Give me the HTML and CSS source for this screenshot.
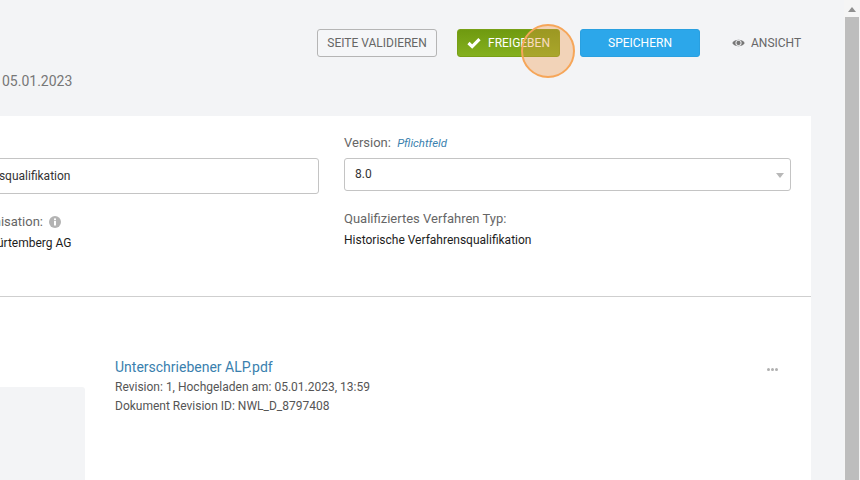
FILE: index.html
```html
<!DOCTYPE html>
<html lang="en">
<head>
    <meta charset="UTF-8">
    <title>Verfahren</title>
    <link rel="stylesheet" href="styles.css">
</head>
<body>
    <div class="page">
        <main class="content">
            <div class="topbar">
                <button class="btn btn-outline">SEITE VALIDIEREN</button>
                <div class="release-wrap">
                    <button class="btn btn-green">
                        <svg class="check" viewBox="0 0 14 12" width="14" height="12"><path d="M1.5 6 L5.2 9.6 L12.5 2.2" fill="none" stroke="#fff" stroke-width="3.2"/></svg>
                        FREIGEBEN
                    </button>
                    <span class="click-marker"></span>
                </div>
                <button class="btn btn-blue">SPEICHERN</button>
                <a class="view-link">
                    <svg viewBox="0 0 14 10" width="13" height="10"><path d="M0.3 5 C3 0.4 11 0.4 13.7 5 C11 9.6 3 9.6 0.3 5 Z" fill="#777"/><circle cx="7" cy="5" r="3.3" fill="#f3f4f6"/><circle cx="7" cy="5" r="2.3" fill="#777"/></svg>
                    ANSICHT
                </a>
            </div>
            <div class="date-line">05.01.2023</div>

            <section class="card">
                <div class="form-grid">
                    <div class="field">
                        <div class="label">&nbsp;</div>
                        <div class="input input-text">Historische Verfahrensqualifikation</div>
                        <div class="label label-info">
                            Verantwortliche Organisation:
                            <svg viewBox="0 0 12 12" width="12" height="12"><circle cx="6" cy="6" r="6" fill="#b3b3b3"/><rect x="5" y="5" width="2" height="4.5" fill="#fff"/><rect x="5" y="2.4" width="2" height="1.8" fill="#fff"/></svg>
                        </div>
                        <div class="value">EnBW Energie Baden-Würtemberg AG</div>
                    </div>
                    <div class="field">
                        <div class="label">Version: <em class="required">Pflichtfeld</em></div>
                        <div class="input input-select">8.0<span class="caret"></span></div>
                        <div class="label label-info">Qualifiziertes Verfahren Typ:</div>
                        <div class="value">Historische Verfahrensqualifikation</div>
                    </div>
                </div>
                <hr class="divider">
                <div class="doc-row">
                    <div class="doc-thumb"></div>
                    <div class="doc-info">
                        <a class="doc-title">Unterschriebener ALP.pdf</a>
                        <div class="doc-meta">Revision: 1, Hochgeladen am: 05.01.2023, 13:59</div>
                        <div class="doc-meta">Dokument Revision ID: NWL_D_8797408</div>
                    </div>
                    <div class="doc-more"><i></i><i></i><i></i></div>
                </div>
            </section>
        </main>
        <div class="scrollbar">
            <span class="arrow"></span>
            <div class="thumb"></div>
        </div>
    </div>
</body>
</html>
```

FILE: styles.css
```css
html, body {
    margin: 0;
    height: 480px;
    overflow: hidden;
}

body {
    font-family: Roboto, Arial, sans-serif;
    background-color: #f3f4f6;
    color: #555;
}

.page {
    display: flex;
    height: 480px;
}

.content {
    flex: 1;
    min-width: 0;
    padding-top: 29px;
}

.topbar {
    display: flex;
    align-items: center;
    height: 28px;
    padding-left: 317px;
}

.btn {
    height: 28px;
    box-sizing: border-box;
    font-family: Roboto, Arial, sans-serif;
    font-size: 12px;
    border-radius: 3px;
    padding: 0;
}

.btn-outline {
    width: 120px;
    background: #f5f6f8;
    border: 1px solid #b5b5b5;
    color: #666;
}

.release-wrap {
    position: relative;
    margin-left: 20px;
}

.btn-green {
    display: flex;
    align-items: center;
    justify-content: center;
    gap: 7px;
    width: 103px;
    background: linear-gradient(#6f9a10, #84b01f);
    border: 1px solid #78a016;
    color: #fff;
}

.click-marker {
    position: absolute;
    left: 64px;
    top: -5px;
    width: 50px;
    height: 50px;
    border: 2px solid #f6a659;
    border-radius: 50%;
    background: rgba(240, 150, 70, 0.35);
}

.btn-blue {
    width: 120px;
    margin-left: 20px;
    background: #2ca7ea;
    border: 1px solid #2aa0e0;
    color: #fff;
}

.view-link {
    display: flex;
    align-items: center;
    gap: 6px;
    margin-left: 32px;
    font-size: 12px;
    color: #666;
}

.date-line {
    margin-top: 15px;
    margin-left: 2px;
    font-size: 14px;
    line-height: 18px;
    color: #777;
}

.card {
    width: 811px;
    height: 364px;
    margin-top: 26px;
    background: #fff;
    overflow: hidden;
}

.form-grid {
    display: flex;
    gap: 25px;
    margin-left: -128px;
    padding-top: 19px;
}

.field {
    flex: none;
    width: 447px;
}

.label {
    height: 16px;
    line-height: 16px;
    font-size: 13px;
    color: #666;
}

.required {
    margin-left: 3px;
    font-size: 11.4px;
    color: #3a7fae;
}

.input {
    margin-top: 7px;
    box-sizing: border-box;
    background: #fff;
    border: 1px solid #c4c4c4;
    border-radius: 3px;
    padding-left: 10px;
    font-size: 12px;
    color: #333;
}

.input-text {
    height: 36px;
    line-height: 34px;
}

.input-select {
    position: relative;
    height: 33px;
    margin-bottom: 3px;
    line-height: 30px;
}

.caret {
    position: absolute;
    right: 6px;
    top: 14px;
    border-left: 4px solid transparent;
    border-right: 4px solid transparent;
    border-top: 5px solid #b8b8b8;
}

.label-info {
    display: flex;
    align-items: center;
    gap: 6px;
    margin-top: 20px;
}

.value {
    margin-top: 5px;
    font-size: 12px;
    line-height: 16px;
    color: #1c1c1c;
}

.divider {
    margin: 45px 0 0;
    border: none;
    border-top: 1px solid #cfcfcf;
}

.doc-row {
    position: relative;
    display: flex;
    gap: 30px;
    height: 170px;
}

.doc-thumb {
    width: 85px;
    height: 93px;
    margin-top: 90px;
    background: #f3f4f6;
    border-top-right-radius: 3px;
}

.doc-info {
    padding-top: 61px;
}

.doc-title {
    display: block;
    font-size: 14px;
    line-height: 18px;
    color: #3a7fae;
}

.doc-meta {
    margin-top: 3px;
    font-size: 12px;
    line-height: 16px;
    color: #555;
}

.doc-more {
    position: absolute;
    left: 767px;
    top: 71px;
    display: flex;
    gap: 1px;
}

.doc-more i {
    width: 3px;
    height: 3px;
    border-radius: 50%;
    background: #b0b0b0;
}

.scrollbar {
    width: 16px;
    box-sizing: border-box;
    padding: 7px 1px 0;
    background: #f5f5f5;
}

.arrow {
    display: block;
    width: 0;
    margin: 0 auto;
    border-left: 4px solid transparent;
    border-right: 4px solid transparent;
    border-bottom: 5px solid #8f8f8f;
}

.thumb {
    height: 463px;
    margin-top: 5px;
    background: #bdbdbd;
}
```
